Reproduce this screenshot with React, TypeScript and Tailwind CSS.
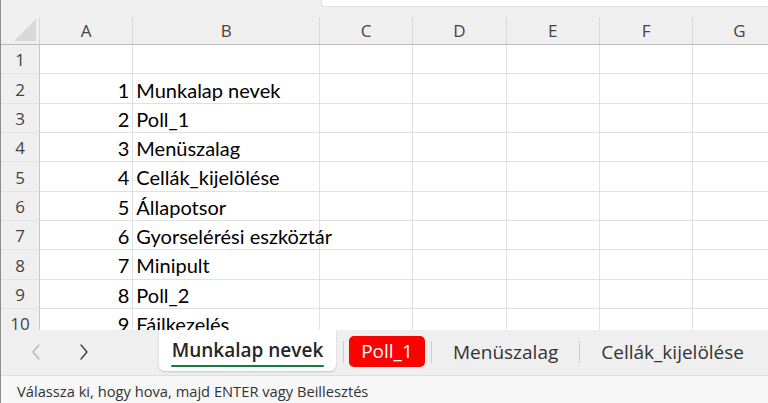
import React from "react";

const cols = ["A", "B", "C", "D", "E", "F", "G"];
const widths = [93.33, 186.67, 93.33, 93.33, 93.33, 93.33, 93.33];
const data: [string, string][] = [
  ["", ""],
  ["1", "Munkalap nevek"],
  ["2", "Poll_1"],
  ["3", "Menüszalag"],
  ["4", "Cellák_kijelölése"],
  ["5", "Állapotsor"],
  ["6", "Gyorselérési eszköztár"],
  ["7", "Minipult"],
  ["8", "Poll_2"],
  ["9", "Fájlkezelés"],
];

const ui = { fontFamily: '"Open Sans", "Noto Sans", sans-serif' };
const cellFont = { fontFamily: 'Lato, "Liberation Sans", sans-serif' };

function Chevron({ dir, color }: { dir: "l" | "r"; color: string }) {
  return (
    <svg width="10" height="16" viewBox="0 0 10 16" fill="none">
      <polyline
        points={dir === "l" ? "8,1 2,8 8,15" : "2,1 8,8 2,15"}
        stroke={color}
        strokeWidth="1.3"
        strokeLinecap="round"
        strokeLinejoin="round"
      />
    </svg>
  );
}

export default function App() {
  return (
    <div className="w-[768px] h-[403px] overflow-hidden flex flex-col border-l border-[#8c8c8c] bg-[#efefef]" style={ui}>
      {/* top strip */}
      <div className="h-[17px] flex justify-end shrink-0">
        <div className="w-[447px] h-[7px] bg-white rounded-bl-[4px] border-b border-l border-[#e2e2e2]" />
      </div>
      {/* column header */}
      <div className="h-[28px] flex shrink-0 border-b border-[#bdbdbd]">
        <div className="w-[39px] shrink-0 relative border-r border-[#d9d9d9]">
          <div
            className="absolute right-[3px] bottom-[3px] w-[22px] h-[22px] bg-[#d8d8d8]"
            style={{ clipPath: "polygon(100% 0, 100% 100%, 0 100%)" }}
          />
        </div>
        {cols.map((c, i) => (
          <div
            key={c}
            className="flex items-center justify-center text-[17px] text-[#444] border-r border-[#dadada] shrink-0 pt-[1px]"
            style={{ width: widths[i] }}
          >
            {c}
          </div>
        ))}
      </div>
      {/* grid */}
      <div className="h-[285px] overflow-hidden shrink-0">
        {data.map((r, ri) => (
          <div key={ri} className="h-[29.33px] flex">
            <div className="w-[39px] shrink-0 flex items-center justify-center text-[17px] text-[#444] bg-[#efefef] border-r border-b border-[#c8c8c8] border-b-[#e1e1e1] pt-[2px]">
              {ri + 1}
            </div>
            {widths.map((w, ci) => (
              <div
                key={ci}
                className={
                  "shrink-0 bg-white border-r border-b border-[#e1e1e1] flex items-center text-[20px] text-black px-[3px] pt-[2px] whitespace-nowrap " +
                  (ci === 0 ? "justify-end" : "justify-start")
                }
                style={{ width: w, ...cellFont }}
              >
                <span className="relative z-10">{ci === 0 ? r[0] : ci === 1 ? r[1] : ""}</span>
              </div>
            ))}
          </div>
        ))}
      </div>
      {/* tab bar */}
      <div className="h-[46px] shrink-0 flex items-start border-b border-[#dedede]">
        <div className="w-[158px] shrink-0 h-[44px] flex items-center">
          <div className="ml-[30px]"><Chevron dir="l" color="#b4b4b4" /></div>
          <div className="ml-[38px]"><Chevron dir="r" color="#3c3c3c" /></div>
        </div>
        <div className="h-[41px] w-[177px] shrink-0 bg-white rounded-b-[6px] shadow-[0_1px_2px_rgba(0,0,0,0.18)] flex flex-col items-center justify-center">
          <div className="text-[19px] font-semibold text-[#262626] leading-[24px] pt-[4px] whitespace-nowrap">Munkalap nevek</div>
          <div className="w-[153px] h-[2.5px] bg-[#137e43] mt-[3px] rounded-full" />
        </div>
        <div className="w-[1px] h-[22px] bg-[#cccccc] mt-[11px] ml-[7px] shrink-0" />
        <div className="ml-[5px] mt-[6px] h-[31px] w-[76px] shrink-0 bg-[#ff0000] rounded-[5px] flex items-center justify-center text-white text-[19px]">
          Poll_1
        </div>
        <div className="w-[1px] h-[22px] bg-[#cccccc] mt-[11px] ml-[6px] shrink-0" />
        <div className="h-[44px] flex items-center text-[19px] text-[#333] px-[21px] whitespace-nowrap shrink-0">Menüszalag</div>
        <div className="w-[1px] h-[22px] bg-[#cccccc] mt-[11px] shrink-0" />
        <div className="h-[44px] flex items-center text-[19px] text-[#333] px-[21px] whitespace-nowrap shrink-0">Cellák_kijelölése</div>
      </div>
      {/* status bar */}
      <div className="flex-1 bg-[#f7f7f7] flex items-center pl-[16px] pt-[3px] text-[14.7px] text-[#333] whitespace-nowrap">
        Válassza ki, hogy hova, majd ENTER vagy Beillesztés
      </div>
    </div>
  );
}
